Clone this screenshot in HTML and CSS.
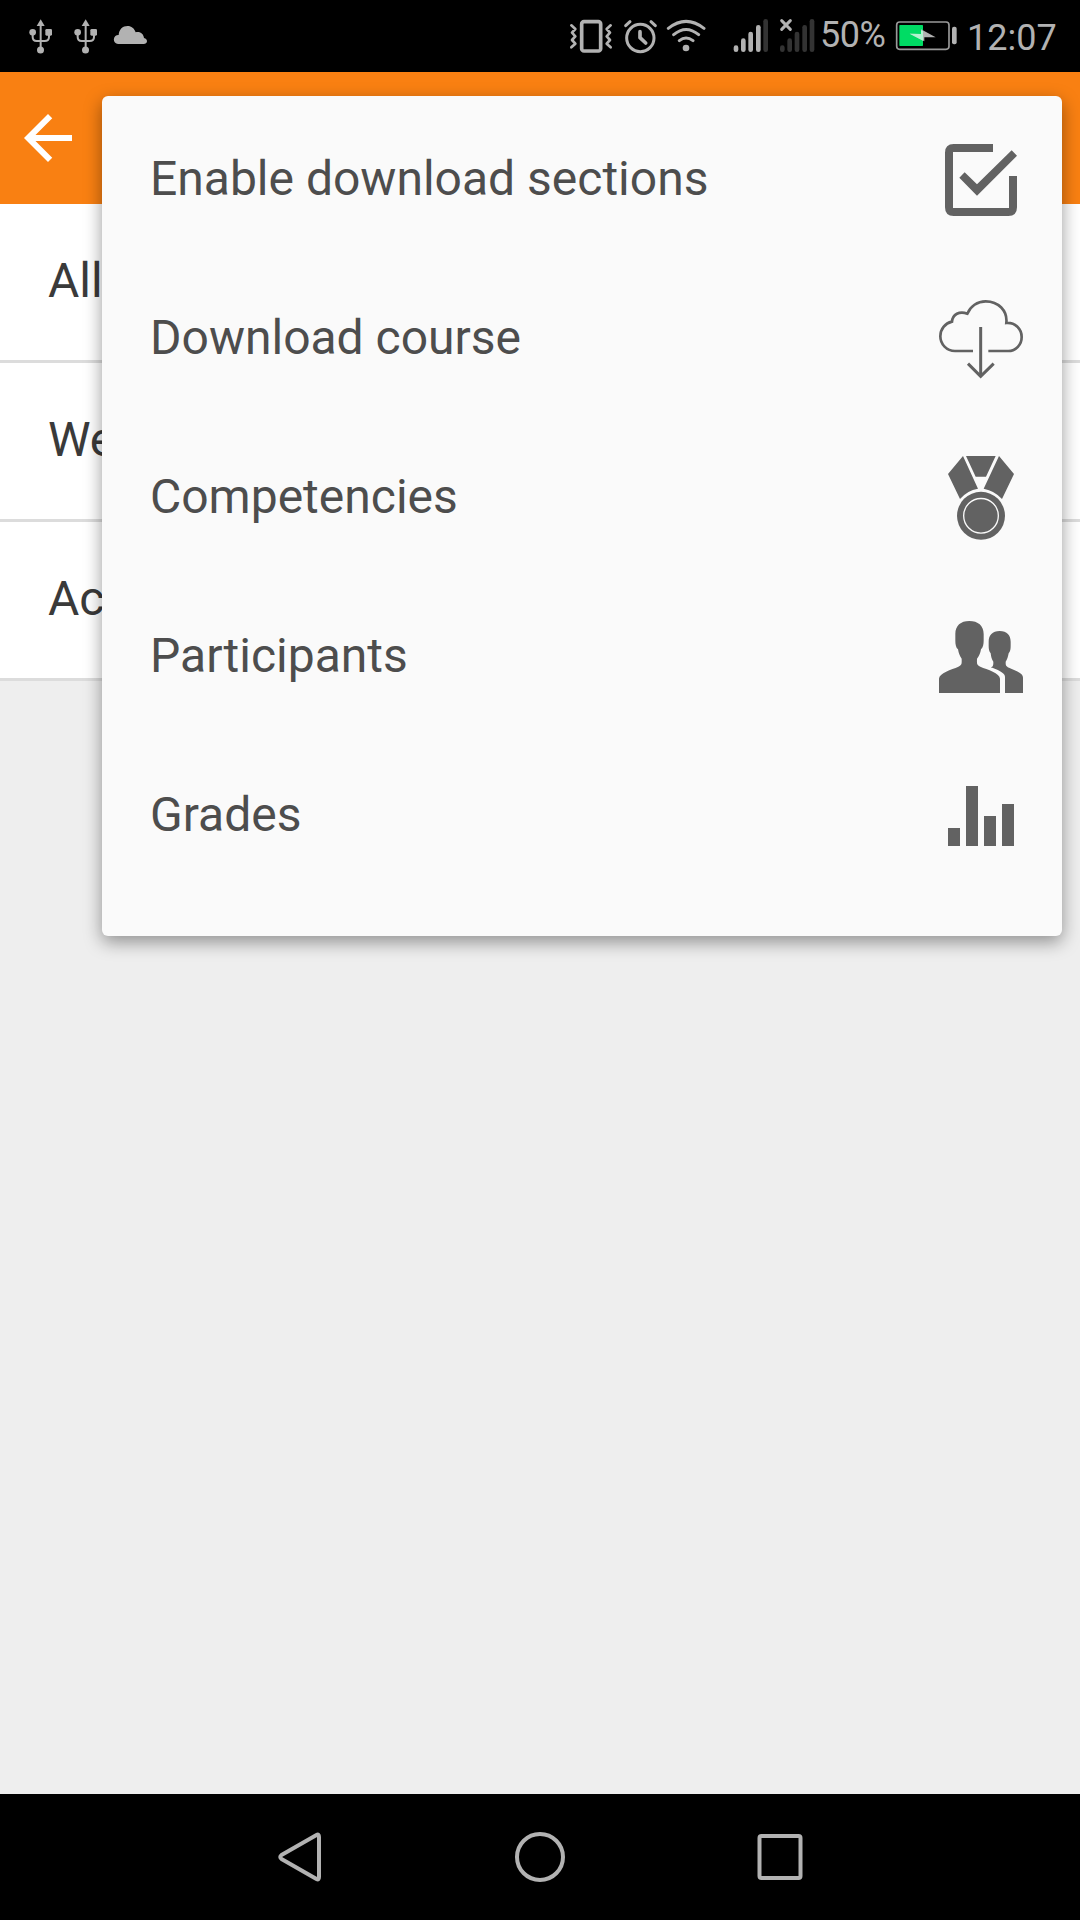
FILE: index.html
```html
<!DOCTYPE html>
<html lang="en">
<head>
    <meta charset="UTF-8">
    <meta name="viewport" content="width=device-width, initial-scale=1.0">
    <title>Course</title>
    <link rel="stylesheet" href="styles.css">
</head>
<body>
    <div class="status-bar">
        <svg class="usb" viewBox="84 0 78 216">
            <g id="usb">
                <path d="M122 70V145M98 100V111Q98 123 110 123H134Q147 123 147 111V103" fill="none" stroke="#b2b2b2" stroke-width="6"/>
                <path d="M122 58L134 78H110Z"/>
                <circle cx="98" cy="97" r="10"/>
                <rect x="136" y="87" width="20" height="20" rx="4"/>
                <circle cx="121.500" cy="150" r="10.500"/>
            </g>
        </svg>
        <svg class="usb" viewBox="84 0 78 216"><use href="#usb"/></svg>
        <svg class="cloud" viewBox="339 0 105 216">
            <path d="M354 132A13 13 0 0 1 356 105C357 88 368 78 383 78C394 78 403 85 407 97C420 93 431 102 432 114C438 115 441 119 441 124Q440 132 431 132Z"/>
        </svg>
        <div class="spacer"></div>
        <svg class="vibrate" viewBox="57 0 132 216">
            <g class="line">
                <rect x="95" y="65" width="57" height="88" rx="7" stroke-width="11"/>
                <path d="M64 76L76 87L66 98L76 109L66 120L76 131L64 142M182 76L170 87L180 98L170 109L180 120L170 131L182 142" stroke-width="8"/>
            </g>
        </svg>
        <svg class="alarm" viewBox="219 0 105 216">
            <g class="line">
                <circle cx="271" cy="114" r="41" stroke-width="9"/>
                <path d="M270 95V113L287 129" stroke-width="11"/>
                <path d="M227 77L240 65M303 65L316 77" stroke-width="9"/>
            </g>
        </svg>
        <svg class="wifi" viewBox="348 0 120 216">
            <path class="line" d="M355 85Q408 43 462 85M371 104Q408 73 446 104M388 122Q408 106 429 122" stroke-width="9"/>
            <circle cx="408" cy="144" r="10"/>
        </svg>
        <svg class="signal" viewBox="549 0 108 216">
            <rect x="551" y="136" width="14" height="20" rx="7"/>
            <rect x="573" y="115" width="14" height="41" rx="7"/>
            <rect x="595" y="95" width="14" height="61" rx="7"/>
            <rect x="618" y="75" width="14" height="81" rx="7"/>
            <rect class="off" x="640" y="57" width="14" height="99" rx="7"/>
        </svg>
        <svg class="signal signal-none" viewBox="687 0 108 216">
            <g class="off">
                <rect x="690" y="136" width="14" height="20" rx="7"/>
                <rect x="712" y="115" width="14" height="41" rx="7"/>
                <rect x="734" y="95" width="14" height="61" rx="7"/>
                <rect x="757" y="75" width="14" height="81" rx="7"/>
                <rect x="779" y="57" width="14" height="99" rx="7"/>
            </g>
            <path class="line" d="M695 62L721 88M721 62L695 88" stroke-width="9"/>
        </svg>
        <span class="percent">50%</span>
        <svg class="battery" viewBox="255 0 186 216">
            <rect x="260" y="66" width="157" height="82" rx="9" fill="none" stroke="#999" stroke-width="5"/>
            <rect x="268" y="75" width="71" height="63" rx="2" fill="#00dc64"/>
            <path d="M299 101L333 102V88L377 112L343 112V124Z" fill="#b2b2b2"/>
            <path d="M299 101L333 102V91L339 93V122Z" fill="#b2f4d0"/>
            <rect x="426" y="80" width="14" height="53" rx="6"/>
        </svg>
        <span class="time">12:07</span>
    </div>

    <div class="header">
        <svg class="back" viewBox="0 0 24 24"><path d="M20 11H7.83l5.59-5.59L12 4l-8 8 8 8 1.41-1.41L7.83 13H20v-2z"/></svg>
    </div>

    <div class="sections">
        <div class="section">All</div>
        <div class="section">We</div>
        <div class="section">Ac</div>
    </div>

    <div class="popover">
        <div class="item">
            <span>Enable download sections</span>
            <svg class="icon" viewBox="39 33 288 285">
                <path d="M219 72H101Q75 72 75 98V262Q75 288 101 288H265Q291 288 291 262V168H267V264H99V96H219Z"/>
                <path d="M118 173L134 157L171 193L275 91L291 107L171 227Z"/>
            </svg>
        </div>
        <div class="item">
            <span>Download course</span>
            <svg class="icon" viewBox="39 30 288 285">
                <g fill="none" stroke="#626262" stroke-width="8">
                    <path d="M159 213H105C80 213 61 193 61 169C61 147 75 130 96 125C98 103 118 92 142 101C151 79 172 64 197 64C235 64 263 92 259 129C286 127 305 147 305 171C305 194 288 213 265 213H205"/>
                    <path d="M182 141V288" stroke-width="9"/>
                    <path d="M144 251L182 289L221 251" stroke-width="9"/>
                </g>
            </svg>
        </div>
        <div class="item">
            <span>Competencies</span>
            <svg class="icon" viewBox="39 27 288 285">
                <path d="M129 48L174 146Q142 151 120 177L84 102ZM138 48H227L198 110H167ZM237 48L282 102L246 177Q224 152 191 146Z"/>
                <circle cx="183" cy="227.500" r="72"/>
                <circle cx="183" cy="227.500" r="52" fill="none" stroke="#fafafa" stroke-width="4"/>
            </svg>
        </div>
        <div class="item">
            <span>Participants</span>
            <svg class="icon" viewBox="39 24 288 285">
                <path d="M57 279V236C57 219 95 209 115 200C127 195 125 188 125 176C119 168 116 159 114 148C108 143 106 133 106 122V102C106 77 122 63 148 63C174 63 191 77 191 102V122C191 133 189 142 183 148C181 159 178 168 171 176C171 188 169 195 181 200C202 209 240 219 240 236V279Z"/>
                <path d="M255 279V230C255 218 230 208 212 202C220 200 220 195 220 185C215 178 213 169 212 160C207 154 206 146 206 137V125C206 106 217 93 239 93C261 93 272 106 272 125V137C272 146 271 154 266 160C264 169 262 178 257 185C257 195 257 198 267 203C284 211 309 218 309 233V279Z"/>
            </svg>
        </div>
        <div class="item">
            <span>Grades</span>
            <svg class="icon" viewBox="39 21 288 285">
                <path d="M84 204H120V258H84ZM138 78H174V258H138ZM192 168H228V258H192ZM246 132H282V258H246Z"/>
            </svg>
        </div>
    </div>

    <div class="nav-bar">
        <svg viewBox="0 0 54 54"><path d="M43.500 5Q46 3.500 46 7V47Q46 50.500 43.500 49L8.500 29Q6 27 8.500 25Z" stroke-linejoin="round"/></svg>
        <svg viewBox="0 0 54 54"><circle cx="27" cy="27" r="23"/></svg>
        <svg viewBox="0 0 54 54"><rect x="6.500" y="6" width="41" height="42" rx="2"/></svg>
    </div>
</body>
</html>
```

FILE: styles.css
```css
body{
    margin: 0;
    height: 1920px;
    display: flex;
    flex-direction: column;
    background-color: #eee;
    font-family: Roboto, sans-serif;
    overflow: hidden;
}
svg {
    display: block;
    flex: none;
}
.status-bar {
    display: flex;
    height: 72px;
    padding: 0 23px 0 28px;
    background-color: #000;
    color: #b2b2b2;
    font-size: 36px;
    line-height: 72px;
}
.status-bar svg {
    height: 72px;
    fill: #b2b2b2;
}
.status-bar .line {
    fill: none;
    stroke: #b2b2b2;
    stroke-linecap: round;
    stroke-linejoin: round;
}
.status-bar .off {
    fill: #333;
}
.usb {
    width: 26px;
    margin-right: 19px;
}
.cloud {
    width: 35px;
    margin-left: -5px;
}
.spacer {
    flex: 1;
}
.vibrate {
    width: 44px;
    margin-right: 10px;
}
.alarm {
    width: 35px;
    margin-right: 8px;
}
.wifi {
    width: 40px;
    margin-right: 27px;
}
.signal {
    width: 36px;
    margin-right: 10px;
}
.signal-none {
    margin-right: 5px;
}
.percent {
    width: 75px;
    line-height: 71px;
    letter-spacing: -0.5px;
}
.battery {
    width: 62px;
    margin-right: 10px;
}
.time {
    width: 90px;
    line-height: 77px;
}

.header {
    display: flex;
    align-items: center;
    height: 132px;
    padding-left: 12px;
    background-color: #f98012;
}
.back {
    width: 72px;
    height: 72px;
    fill: #fff;
}

.section {
    box-sizing: border-box;
    height: 159px;
    padding-left: 48px;
    border-bottom: 3px solid #dcdcdc;
    background-color: #fff;
    color: #3a3a3a;
    font-size: 48px;
    line-height: 154px;
}

/* menu over the page */
.popover {
    position: absolute;
    top: 96px;
    left: 102px;
    box-sizing: border-box;
    width: 960px;
    height: 840px;
    padding-top: 3px;
    border-radius: 6px;
    background-color: #fafafa;
    box-shadow: 0 6px 18px rgba(0, 0, 0, 0.4);
}
.item {
    display: flex;
    align-items: center;
    justify-content: space-between;
    height: 159px;
    padding: 0 33px 0 48px;
    color: #4d4d4d;
    font-size: 48px;
}
.icon {
    width: 96px;
    height: 95px;
    fill: #626262;
}

.nav-bar {
    display: flex;
    align-items: center;
    justify-content: center;
    gap: 186px;
    height: 126px;
    margin-top: auto;
    background-color: #000;
}
.nav-bar svg {
    width: 54px;
    height: 54px;
    fill: none;
    stroke: #b2b2b2;
    stroke-width: 4;
}
```
